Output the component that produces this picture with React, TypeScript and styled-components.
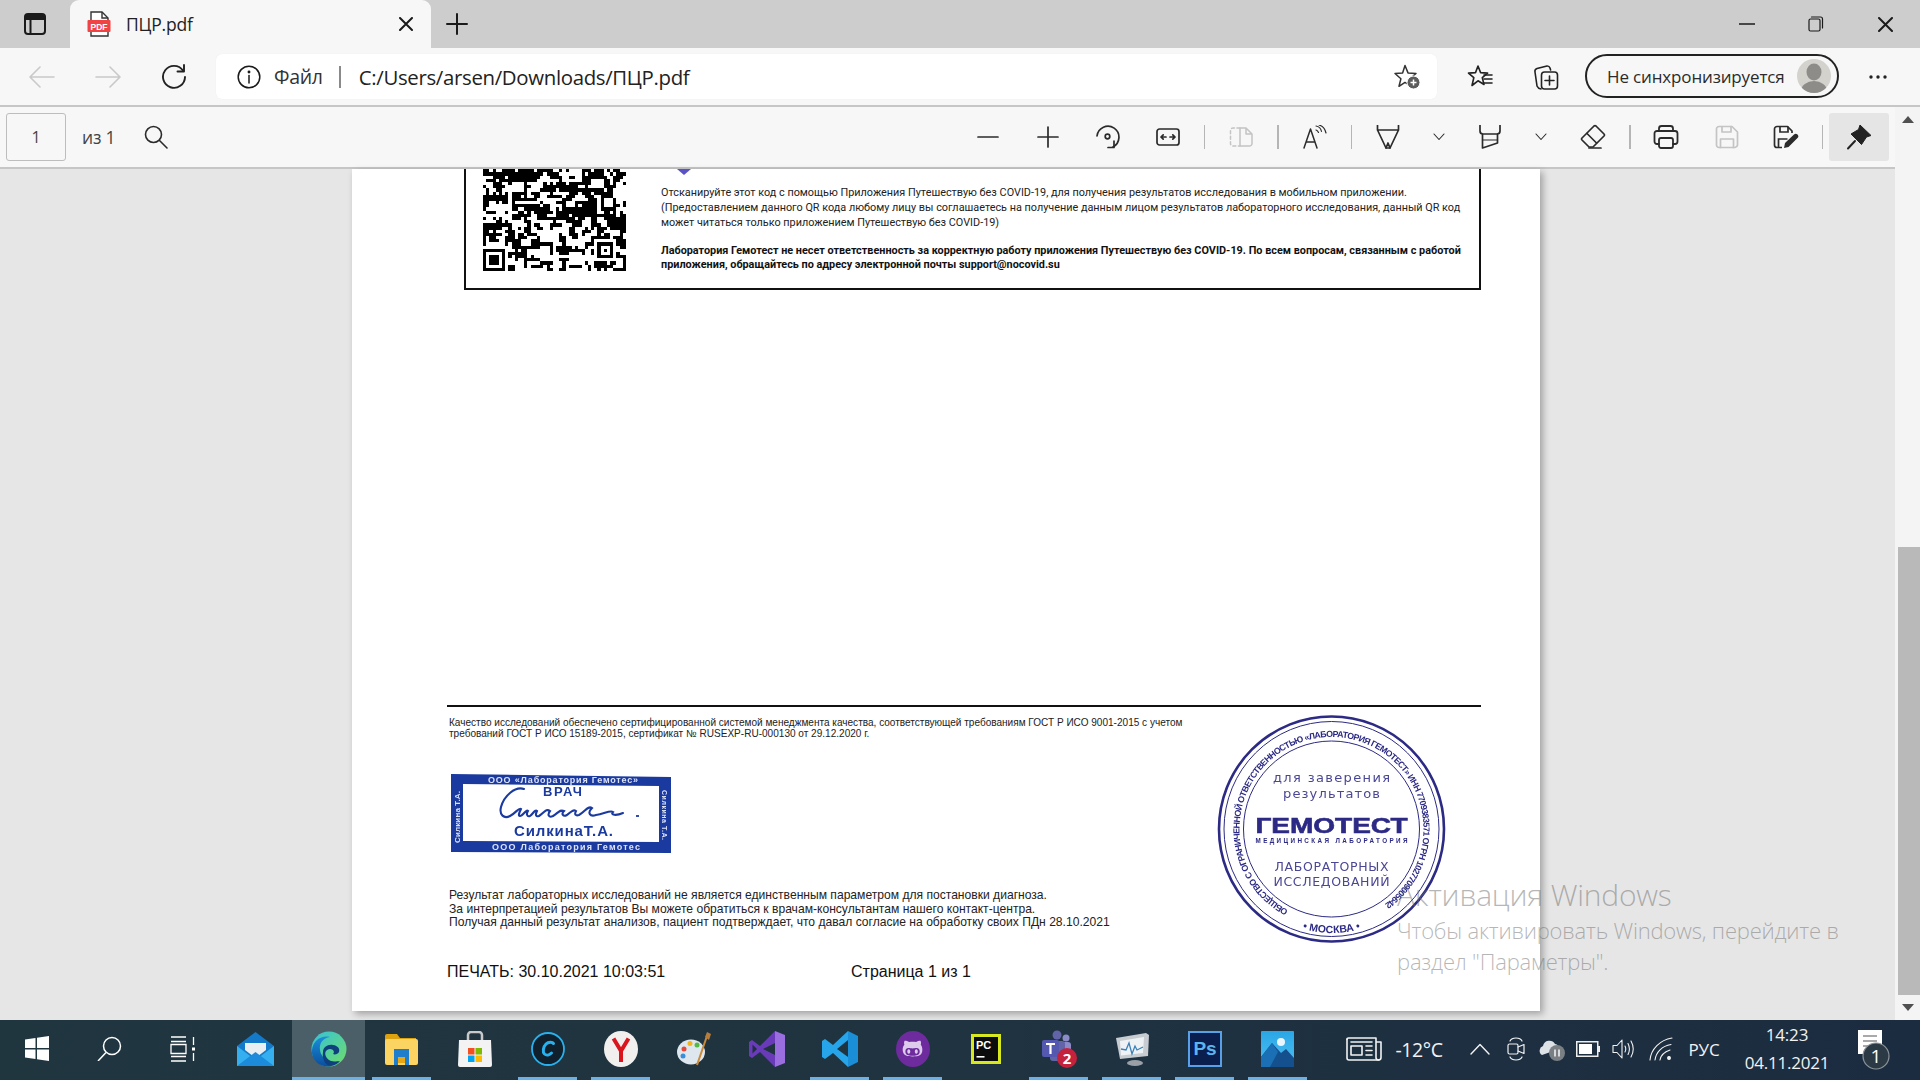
import React from 'react';
import styled, { createGlobalStyle } from 'styled-components';
import { FaGithubAlt } from 'react-icons/fa';

const GlobalStyle = createGlobalStyle`
  html, body { margin: 0; padding: 0; background: #e6e6e6; }
  body { font-family: "Open Sans", "Noto Sans", sans-serif; overflow: hidden; }
  * { box-sizing: border-box; }
`;

const Win = styled.div`
  position: relative;
  width: 1920px;
  height: 1080px;
  display: flex;
  flex-direction: column;
  overflow: hidden;
`;

/* ---------- tab strip ---------- */
const TabStrip = styled.div`
  height: 48px;
  flex: none;
  display: flex;
  align-items: stretch;
  background: #cdcdcd;
  color: #1a1a1a;
`;
const Slot = styled.div<{ $w: number; $ml?: number; $c?: string }>`
  width: ${p => p.$w}px;
  margin-left: ${p => p.$ml ?? 0}px;
  flex: none;
  display: flex;
  align-items: center;
  justify-content: center;
  color: ${p => p.$c ?? 'inherit'};
`;
const Tab = styled.div`
  width: 361px;
  padding: 0 18px 0 17px;
  display: flex;
  align-items: center;
  background: #f7f7f7;
  border-radius: 9px 9px 0 0;
`;
const TabTitle = styled.span`
  flex: 1;
  margin-left: 15px;
  font-size: 17.5px;
  color: #222;
  letter-spacing: -0.2px;
`;
const WinControls = styled.div`
  margin-left: auto;
  display: flex;
`;

/* ---------- address bar ---------- */
const AddressBar = styled.div`
  height: 59px;
  flex: none;
  display: flex;
  align-items: flex-start;
  padding: 6px 0 0 21px;
  background: #f7f7f7;
  border-bottom: 2px solid #c6c6c6;
  color: #1a1a1a;
`;
const NavBtn = styled.div<{ $w: number; $ml?: number; $mr?: number; $off?: boolean }>`
  width: ${p => p.$w}px;
  height: 45px;
  margin-left: ${p => p.$ml ?? 0}px;
  margin-right: ${p => p.$mr ?? 0}px;
  flex: none;
  display: flex;
  align-items: center;
  justify-content: center;
  color: ${p => (p.$off ? '#c9c9c9' : '#222')};
`;
const Omnibox = styled.div`
  width: 1221px;
  height: 45px;
  flex: none;
  display: flex;
  align-items: center;
  padding-left: 21px;
  background: #fff;
  border-radius: 6px;
  box-shadow: 0 0 1px rgba(0, 0, 0, 0.08);
`;
const FileLabel = styled.span`
  margin-left: 13px;
  font-size: 19.5px;
  color: #333;
  letter-spacing: -0.3px;
`;
const UrlDivider = styled.span`
  width: 2px;
  height: 22px;
  margin: 0 18px 0 16px;
  background: #8a8a8a;
`;
const Url = styled.span`
  flex: 1;
  font-size: 20.4px;
  color: #222;
  letter-spacing: -0.33px;
`;
const SyncPill = styled.div`
  width: 254px;
  height: 44px;
  margin-left: 8px;
  padding: 0 6px 0 20px;
  flex: none;
  display: flex;
  align-items: center;
  justify-content: space-between;
  border: 2px solid #222;
  border-radius: 22px;
  font-size: 17px;
  letter-spacing: -0.15px;
  color: #2b2b2b;
`;

/* ---------- viewer ---------- */
const Viewer = styled.div`
  flex: 1;
  min-height: 0;
  display: flex;
`;
const ViewerMain = styled.div`
  flex: 1;
  min-width: 0;
  display: flex;
  flex-direction: column;
`;
const PdfToolbar = styled.div`
  height: 62px;
  flex: none;
  display: flex;
  align-items: center;
  padding-left: 6px;
  background: #f7f7f7;
  border-bottom: 2px solid #c6c6c6;
  color: #2b2b2b;
`;
const PageInput = styled.div`
  width: 60px;
  height: 48px;
  display: flex;
  align-items: center;
  justify-content: center;
  border: 1px solid #bdbdbd;
  border-radius: 3px;
  font-size: 16px;
  color: #444;
`;
const PageCount = styled.span`
  margin-left: 16px;
  font-size: 17.5px;
  color: #444;
  letter-spacing: -0.2px;
`;
const SearchBtn = styled.div`
  margin-left: 29px;
  display: flex;
`;
const ToolGroup = styled.div`
  margin-left: auto;
  display: flex;
  align-items: center;
  height: 100%;
  padding-right: 6px;
`;
const ToolBtn = styled.div<{ $w: number; $off?: boolean; $on?: boolean }>`
  width: ${p => p.$w}px;
  height: 48px;
  flex: none;
  display: flex;
  align-items: center;
  justify-content: center;
  border-radius: 3px;
  color: ${p => (p.$off ? '#c4c4c4' : '#2b2b2b')};
  background: ${p => (p.$on ? '#e5e5e5' : 'transparent')};
`;
const ToolSep = styled.span<{ $w: number; $strong?: boolean }>`
  width: ${p => p.$w}px;
  flex: none;
  display: flex;
  justify-content: center;
  &::before {
    content: '';
    width: ${p => (p.$strong ? 2 : 1)}px;
    height: 24px;
    background: #b5b5b5;
  }
`;
const Canvas = styled.div`
  flex: 1;
  min-height: 0;
  padding-left: 352px;
  background: #e6e6e6;
`;
const Page = styled.div`
  width: 1188px;
  height: 842px;
  background: #fff;
  box-shadow: 3px 3px 7px rgba(0, 0, 0, 0.3);
  padding-left: 95px;
  color: #111;
  font-family: "Liberation Sans", Arial, sans-serif;
`;

/* qr block, its top is scrolled away */
const QrBox = styled.div`
  width: 1017px;
  height: 121px;
  margin-left: 17px;
  padding-left: 17px;
  display: flex;
  border: 2px solid #111;
  border-top: 0;
`;
const QrText = styled.div`
  position: relative;
  margin-left: 35px;
  padding-top: 16px;
  font-family: Roboto, "Liberation Sans", sans-serif;
  font-size: 10.85px;
  color: #222;
`;
const QrLine = styled.div<{ $bold?: boolean; $gap?: number }>`
  height: ${p => (p.$bold ? 14 : 15)}px;
  line-height: ${p => (p.$bold ? 14 : 15)}px;
  margin-top: ${p => p.$gap ?? 0}px;
  white-space: nowrap;
  font-weight: ${p => (p.$bold ? 700 : 400)};
  color: ${p => (p.$bold ? '#111' : '#222')};
`;
const AppMark = styled.svg`
  position: absolute;
  left: 16px;
  top: 0;
`;
const Rule = styled.div`
  width: 1034px;
  height: 2px;
  margin-top: 415px;
  background: #111;
`;
const Lower = styled.div`
  display: flex;
`;
const LowerLeft = styled.div`
  width: 763px;
  flex: none;
  padding-top: 10px;
`;
const CertText = styled.div`
  padding-left: 2px;
  font-size: 10.05px;
  line-height: 11px;
  color: #222;
  white-space: nowrap;
`;
const DoctorStamp = styled.svg`
  display: block;
  margin: 33px 0 0 3px;
  filter: blur(0.55px);
`;
const Notice = styled.div`
  margin-top: 35px;
  padding-left: 2px;
  font-size: 12.1px;
  line-height: 13.7px;
  color: #222;
  white-space: nowrap;
`;
const PrintRow = styled.div`
  margin-top: 32px;
  display: flex;
  font-size: 16px;
  line-height: 20px;
  color: #111;
  white-space: nowrap;
`;
const PrintDate = styled.span`
  width: 404px;
  flex: none;
`;
const RoundStamp = styled.svg`
  display: block;
  flex: none;
  margin-top: 2px;
  filter: blur(0.35px);
`;

/* ---------- scrollbar ---------- */
const Scrollbar = styled.div`
  width: 25px;
  flex: none;
  display: flex;
  flex-direction: column;
  align-items: flex-end;
  background: #f4f4f4;
`;
const ScrollArrow = styled.div<{ $down?: boolean }>`
  width: 100%;
  height: 25px;
  flex: none;
  display: flex;
  align-items: center;
  justify-content: center;
  &::before {
    content: '';
    border-left: 6px solid transparent;
    border-right: 6px solid transparent;
    ${p => (p.$down ? 'border-top: 7px solid #505050;' : 'border-bottom: 7px solid #505050;')}
  }
`;
const ScrollTrack = styled.div`
  flex: 1;
  width: 100%;
  display: flex;
  flex-direction: column;
  justify-content: flex-end;
  align-items: flex-end;
`;
const ScrollThumb = styled.div`
  width: 22px;
  height: 448px;
  background: #b9b9b9;
`;

/* ---------- taskbar ---------- */
const Taskbar = styled.div`
  height: 60px;
  flex: none;
  display: flex;
  background: linear-gradient(90deg, #20363f 0%, #1f3340 50%, #1c2c40 100%);
  color: #f2f2f2;
`;
const TaskBtn = styled.div<{ $active?: boolean; $open?: boolean }>`
  position: relative;
  width: 73px;
  flex: none;
  display: flex;
  align-items: center;
  justify-content: center;
  padding-bottom: 3px;
  background: ${p => (p.$active ? '#4b5f68' : 'transparent')};
  &::after {
    content: '';
    display: ${p => (p.$open || p.$active ? 'block' : 'none')};
    position: absolute;
    bottom: 0;
    left: ${p => (p.$active ? 0 : 7)}px;
    right: ${p => (p.$active ? 0 : 7)}px;
    height: 3px;
    background: #6cb0e6;
  }
`;
const GithubBadge = styled.div`
  width: 34px;
  height: 36px;
  border-radius: 50%;
  display: flex;
  align-items: center;
  justify-content: center;
  background: #6d2b9e;
  color: #dccbea;
`;
const Tray = styled.div`
  margin-left: 26px;
  display: flex;
  align-items: stretch;
`;
const TrayItem = styled(Slot)`
  padding-bottom: 2px;
`;
const TempText = styled.span`
  font-size: 19.5px;
  letter-spacing: -0.4px;
`;
const LangText = styled.span`
  font-size: 17px;
  letter-spacing: -0.2px;
`;
const Clock = styled.div`
  display: flex;
  flex-direction: column;
  align-items: center;
  gap: 6px;
  font-size: 17px;
  line-height: 22px;
  letter-spacing: -0.2px;
`;

const Watermark = styled.div`
  position: absolute;
  left: 1397px;
  top: 874px;
  color: rgba(110, 110, 110, 0.5);
  font-family: "Open Sans", sans-serif;
  font-weight: 300;
  white-space: nowrap;
  pointer-events: none;
`;
const WmTitle = styled.div`
  font-size: 30px;
  line-height: 41px;
  letter-spacing: -0.2px;
`;
const WmLine = styled.div`
  font-size: 22px;
  line-height: 31px;
  letter-spacing: -0.2px;
`;

/* ---------- icons ---------- */
const S = ({ w, h = w, sw = 1.6, children }: { w: number; h?: number; sw?: number; children: React.ReactNode }) => (
  <svg width={w} height={h} viewBox={`0 0 ${w} ${h}`} fill="none" stroke="currentColor" strokeWidth={sw} strokeLinecap="round" strokeLinejoin="round" style={{ display: 'block', flex: 'none' }}>
    {children}
  </svg>
);

const PanelIcon = () => (
  <S w={24} sw={2}>
    <rect x="2" y="2" width="20" height="20" rx="3" />
    <path d="M2 7h20M7.5 7v15" />
    <path d="M3 4.5h18" strokeWidth="3" />
  </S>
);
const PdfIcon = () => (
  <svg width="24" height="26" viewBox="0 0 24 26" style={{ display: 'block', flex: 'none' }}>
    <path d="M4 1h11l6 6v18H4z" fill="#fff" stroke="#333" strokeWidth="1.4" />
    <path d="M15 1v6h6" fill="none" stroke="#333" strokeWidth="1.4" />
    <rect x="0.5" y="9" width="23" height="12" rx="1" fill="#f04444" />
    <text x="12" y="18.5" textAnchor="middle" fontSize="8.5" fontWeight="700" fontFamily="Liberation Sans, sans-serif" fill="#fff">PDF</text>
  </svg>
);
const XIcon = ({ s = 14 }: { s?: number }) => (
  <S w={s} sw={2}>
    <path d={`M1 1L${s - 1} ${s - 1}M${s - 1} 1L1 ${s - 1}`} />
  </S>
);
const PlusIcon = ({ s = 22, sw = 2 }: { s?: number; sw?: number }) => (
  <S w={s} sw={sw}>
    <path d={`M${s / 2} 1V${s - 1}M1 ${s / 2}H${s - 1}`} />
  </S>
);
const MinIcon = () => (
  <S w={16} h={4} sw={1.3}><path d="M0 2h16" /></S>
);
const RestoreIcon = () => (
  <S w={16} sw={1.2}>
    <rect x="1" y="3" width="11" height="12" rx="1.5" />
    <path d="M3.5 1h9a2 2 0 0 1 2 2v9" />
  </S>
);
const BackIcon = ({ flip }: { flip?: boolean }) => (
  <S w={26} h={22} sw={1.6}>
    <path d={flip ? 'M1 11h24M15 1l10 10-10 10' : 'M25 11H1M11 1L1 11l10 10'} />
  </S>
);
const RefreshIcon = () => (
  <S w={26} sw={1.9}>
    <path d="M22 6.5A11 11 0 1 0 24 13" />
    <path d="M23 1v6.5h-6.5" />
  </S>
);
const InfoIcon = () => (
  <S w={24} sw={1.5}>
    <circle cx="12" cy="12" r="10.8" />
    <path d="M12 10.5v7.5" />
    <circle cx="12" cy="7" r=".7" fill="currentColor" />
  </S>
);
const StarAdd = () => (
  <svg width="28" height="26" viewBox="0 0 28 26" fill="none" style={{ display: 'block' }}>
    <path d="M12 1.5l3 7.4 8 .6-6 5.3 1.6 7.5L12 18.4 6 22.3l1.9-7.6L2 9.5l7.6-.6z" stroke="#333" strokeWidth="1.5" strokeLinejoin="round" />
    <circle cx="20.5" cy="18.5" r="6.5" fill="#5c5c5c" stroke="#fff" strokeWidth="1" />
    <path d="M20.5 15.5v6M17.5 18.5h6" stroke="#fff" strokeWidth="1.5" />
  </svg>
);
const FavIcon = () => (
  <S w={26} sw={1.6}>
    <path d="M11 2l2.6 6.6 7 .5-5.3 4.6 1.7 6.8L11 16.8l-6 4.7 1.8-7.8L1.5 9.1l7-.5z" />
    <path d="M17 11h8M17 15h8M17 19h8" />
  </S>
);
const CollectionIcon = () => (
  <S w={26} sw={1.6}>
    <path d="M8 25a5 5 0 0 1-4-3L2 8a3 3 0 0 1 2-3.5L14 2a3 3 0 0 1 3 2l.6 2" />
    <rect x="8.5" y="8" width="16" height="17" rx="3" />
    <path d="M16.5 12v9M12 16.5h9" />
  </S>
);
const Avatar = () => (
  <svg width="34" height="34" viewBox="0 0 34 34" style={{ display: 'block' }}>
    <defs><clipPath id="av"><circle cx="17" cy="17" r="17" /></clipPath></defs>
    <circle cx="17" cy="17" r="17" fill="#d3d2cd" />
    <g clipPath="url(#av)" fill="#8e8c88">
      <ellipse cx="17" cy="13" rx="7.5" ry="8.5" />
      <ellipse cx="17" cy="32" rx="13" ry="10" />
    </g>
  </svg>
);
const DotsIcon = () => (
  <svg width="18" height="4" viewBox="0 0 18 4" style={{ display: 'block' }} fill="#222">
    <circle cx="2" cy="2" r="1.7" /><circle cx="9" cy="2" r="1.7" /><circle cx="16" cy="2" r="1.7" />
  </svg>
);
const SearchIcon = () => (
  <S w={24} sw={1.6}>
    <circle cx="9.5" cy="9.5" r="8" />
    <path d="M15.5 15.5L23 23" />
  </S>
);
const RotateIcon = () => (
  <S w={26} sw={1.7}>
    <path d="M2 12A11 11 0 1 1 18 23" />
    <path d="M19 17v6.5h-6" />
    <circle cx="12.5" cy="12.5" r="2.3" />
  </S>
);
const FitIcon = () => (
  <S w={24} h={18} sw={1.7}>
    <rect x="1" y="1" width="22" height="16" rx="2.5" />
    <path d="M5 9h5M5 9l2.200-2.200M5 9l2.200 2.200M19 9h-5M19 9l-2.200-2.200M19 9l-2.200 2.200" />
  </S>
);
const PageViewIcon = () => (
  <S w={24} sw={1.5}>
    <path d="M11 3H4a2.5 2.5 0 0 0-2.500 2.500v13A2.5 2.5 0 0 0 4 21h7" strokeDasharray="3 2.5" />
    <path d="M11 3h6l6 6v9.500a2.5 2.5 0 0 1-2.500 2.500H11zM17 3v6h6" />
  </S>
);
const ReadAloudIcon = () => (
  <S w={24} sw={1.5}>
    <path d="M1 23L7.500 4 14 23M3.200 17h8.600" />
    <path d="M13 1c3 .5 5 3 5.500 5.500M16 0c3 .8 6 3.500 7 8M13 5c1.400.4 2 1.300 2.500 2.500" strokeWidth="1.2" />
  </S>
);
const PenIcon = () => (
  <S w={24} sw={1.7}>
    <path d="M1.500 0v5L10 23h4l8.500-18V0M1.500 5h21" />
    <path d="M10 23l2-5 2 5" />
  </S>
);
const HighlightIcon = () => (
  <S w={24} sw={1.7}>
    <path d="M2 0v6a3 3 0 0 0 3 3h14a3 3 0 0 0 3-3V0" />
    <path d="M4.500 9.500V23l15-5V9.500" />
    <path d="M4.500 15h15" strokeWidth="1.2" />
  </S>
);
const ChevronIcon = () => (
  <S w={12} h={8} sw={1.1}>
    <path d="M1 1l5 5.500L11 1" />
  </S>
);
const EraserIcon = () => (
  <S w={26} sw={1.7}>
    <path d="M16 2l8 8a1.5 1.5 0 0 1 0 2L13 23H9l-7-7a1.5 1.5 0 0 1 0-2L14 2a1.5 1.5 0 0 1 2 0z" />
    <path d="M7 9.500L16.500 19M9 24h12" />
  </S>
);
const PrintIcon = () => (
  <S w={26} sw={1.8}>
    <path d="M6 7V4.500A2.5 2.5 0 0 1 8.500 2h9A2.5 2.5 0 0 1 20 4.500V7" />
    <path d="M6 20H4a2.5 2.5 0 0 1-2.500-2.500v-8A2.5 2.5 0 0 1 4 7h18a2.5 2.5 0 0 1 2.500 2.500v8A2.5 2.5 0 0 1 22 20h-2" />
    <rect x="6" y="14" width="14" height="10" rx="2" />
  </S>
);
const SaveIcon = () => (
  <S w={24} sw={1.7}>
    <path d="M4 1.500h13l5.500 5.500v13a3 3 0 0 1-2.500 2.500H4A2.5 2.5 0 0 1 1.500 20V4A2.5 2.5 0 0 1 4 1.500z" />
    <path d="M7 1.500V7h9V1.500M5.500 22.500V14h13v8.500" />
  </S>
);
const SaveAsIcon = () => (
  <svg width="26" height="24" viewBox="0 0 26 24" fill="none" stroke="#2b2b2b" strokeWidth="1.7" style={{ display: 'block' }}>
    <path d="M19 8V6l-4.500-4.500H4A2.5 2.5 0 0 0 1.500 4v16A2.5 2.5 0 0 0 4 22.500h5" strokeLinejoin="round" />
    <path d="M7 1.500V7h8V1.500M5.500 22V14h9" />
    <path d="M11 23l1-5L21 9.500a2.2 2.2 0 0 1 3.500 3.500L15.500 22z" fill="#2b2b2b" stroke="none" />
  </svg>
);
const PinIcon = () => (
  <svg width="26" height="26" viewBox="0 0 26 26" style={{ display: 'block' }}>
    <path d="M14 1l11 10.500-4.500 1.500-5 7.500L5 10l7.500-4.500z" fill="#222" stroke="#222" strokeWidth="1" strokeLinejoin="round" />
    <path d="M9 17L2 24.500" stroke="#222" strokeWidth="2" strokeLinecap="round" />
  </svg>
);

/* taskbar icons */
const TB = ({ children, w = 36, h = 36 }: { children: React.ReactNode; w?: number; h?: number }) => (
  <svg width={w} height={h} viewBox={`0 0 ${w} ${h}`} fill="none" style={{ display: 'block', flex: 'none' }}>
    {children}
  </svg>
);

const WindowsLogo = () => (
  <TB w={24} h={25}>
    <path d="M0 3.500L10.500 2v10H0zM12 1.800L24 0v12H12zM0 13.500h10.500V23L0 21.500zM12 13.500h12V25l-12-1.800z" fill="#fff" />
  </TB>
);
const TbSearch = () => (
  <TB w={25} h={25}>
    <circle cx="15" cy="10" r="8.500" stroke="#fff" strokeWidth="1.5" />
    <path d="M9 16.500L1 25" stroke="#fff" strokeWidth="1.5" />
  </TB>
);
const TaskView = () => (
  <TB w={26} h={26}>
    <path d="M1 1h15M1 5.500h15M1 8.500h15v9H1zM1 20.500h15M1 25h15" stroke="#fff" strokeWidth="1.3" />
    <path d="M23.500 1v8M23.500 17v8" stroke="#fff" strokeWidth="1.3" />
    <rect x="22" y="11.500" width="3" height="3" fill="#fff" />
  </TB>
);
const Mail = () => (
  <TB w={37} h={34}>
    <path d="M18.500 0L37 14v20H0V14z" fill="#1479c8" />
    <path d="M8 11h21v7l-10.500 8L8 18z" fill="#e8eef2" />
    <path d="M0 14l18.500 14L37 14v20H0z" fill="#35aff0" />
    <path d="M0 34l18.500-14L37 34z" fill="#1c8bdc" />
  </TB>
);
const Edge = () => (
  <TB>
    <defs>
      <linearGradient id="edgeA" x1="0" y1="0" x2="1" y2="1"><stop offset="0" stopColor="#36c1d8" /><stop offset="1" stopColor="#6fdc6a" /></linearGradient>
      <linearGradient id="edgeB" x1="0" y1="0" x2="0" y2="1"><stop offset="0" stopColor="#1b8ed8" /><stop offset="1" stopColor="#0a4f9e" /></linearGradient>
    </defs>
    <circle cx="18" cy="18" r="17.500" fill="url(#edgeA)" />
    <path d="M1 19C2 9 11 4 19 6c-7 1-11 6-10 13 1 8 9 14 19 11-3 3-6 5.500-11 5.500C8 35.500 0 29 1 19z" fill="url(#edgeB)" />
    <path d="M12 21c0-5 5-8 10-7 5 .5 7 4 6 7-1 2-4 3-6 2 3-3-2-7-6-4-3 2-2 7 2 10 3 2 8 2 11 1-2 3-6 5-11 4.500C13 33 11 26 12 21z" fill="#103f7e" />
  </TB>
);
const Explorer = () => (
  <TB w={33} h={32}>
    <path d="M0 3a2 2 0 0 1 2-2h10l3 4h16v4H0z" fill="#dea10f" />
    <rect y="6" width="33" height="26" rx="2" fill="#fbd462" />
    <path d="M9 16h15v16h-4v-8h-7v8H9z" fill="#1f7ecb" />
    <path d="M13 24h7v6h-7z" fill="#e8a613" />
  </TB>
);
const Store = () => (
  <TB w={36} h={36}>
    <path d="M11 9V4a3 3 0 0 1 3-3h8a3 3 0 0 1 3 3v5" stroke="#c9c9c9" strokeWidth="2.5" />
    <path d="M2 9h32l1 25a2 2 0 0 1-2 2H3a2 2 0 0 1-2-2z" fill="#f3f3f3" />
    <rect x="11" y="17" width="6.500" height="6.500" fill="#f25022" />
    <rect x="18.500" y="17" width="6.500" height="6.500" fill="#7fba00" />
    <rect x="11" y="24.500" width="6.500" height="6.500" fill="#00a4ef" />
    <rect x="18.500" y="24.500" width="6.500" height="6.500" fill="#ffb900" />
  </TB>
);
const CCleaner = () => (
  <TB w={34} h={34}>
    <circle cx="17" cy="17" r="16" fill="#10202c" stroke="#29b1ee" strokeWidth="1.8" />
    <path d="M22.500 11.500c-1-1.800-5-2-7.500.5-3 3-3.500 8-1.500 10 2 1.800 5 1 7-1" stroke="#29b1ee" strokeWidth="3" strokeLinecap="round" />
  </TB>
);
const Yandex = () => (
  <TB w={34} h={36}>
    <ellipse cx="17" cy="18" rx="17" ry="18" fill="#f2f0ee" />
    <path d="M9.500 7.500L17 20v11M24.500 7.500L17 20" stroke="#d9151e" strokeWidth="4" />
  </TB>
);
const Paint = () => (
  <TB w={34} h={36}>
    <ellipse cx="14" cy="21" rx="14" ry="12.500" fill="#dfe7ee" />
    <circle cx="7" cy="18" r="2.500" fill="#e34a3a" />
    <circle cx="13" cy="12.500" r="2.500" fill="#f2b31d" />
    <circle cx="20" cy="14" r="2.500" fill="#55b947" />
    <circle cx="6" cy="25" r="2.500" fill="#3b8ed8" />
    <path d="M20 34L30 5" stroke="#c98a3a" strokeWidth="2" />
    <path d="M28 6l2-5 4 2-2 6z" fill="#b57c3c" />
  </TB>
);
const VsIcon = () => (
  <TB w={36} h={36}>
    <path d="M26 0l10 4v28l-10 4z" fill="#9a6ede" />
    <path d="M26 0L11 15 3 9l-3 2v14l3 2 8-6 15 15V24L14 18 26 12z" fill="#6a3bb8" />
    <path d="M3.500 13.500L8 18l-4.500 4.500z" fill="#1e2f40" />
  </TB>
);
const VsCode = () => (
  <TB w={36} h={36}>
    <path d="M26 0l10 5v26l-10 5z" fill="#1a8fd8" />
    <path d="M26 0L11 14 3 8 0 10v16l3 2 8-6 15 14v-10L15 18 26 9z" fill="#27a5ea" />
  </TB>
);
const PyCharm = () => (
  <TB w={30} h={30}>
    <rect width="30" height="30" fill="#d8e81e" />
    <rect x="3" y="3" width="24" height="24" fill="#0c0c0c" />
    <text x="5" y="15" fontSize="11" fontWeight="700" fontFamily="Liberation Sans, sans-serif" fill="#fff">PC</text>
    <rect x="5.500" y="22" width="8" height="1.6" fill="#fff" />
  </TB>
);
const Teams = () => (
  <TB w={40} h={40}>
    <circle cx="18" cy="6" r="4.500" fill="#6264a7" />
    <circle cx="27" cy="9" r="3.500" fill="#8b8cc7" />
    <rect x="19" y="13" width="13" height="14" rx="3" fill="#8b8cc7" />
    <rect x="11" y="12" width="15" height="20" rx="3" fill="#6264a7" />
    <rect x="3" y="11" width="17" height="17" rx="2" fill="#5558af" />
    <path d="M7 15h9M11.500 15v10" stroke="#fff" strokeWidth="2.2" />
    <circle cx="28" cy="29" r="10" fill="#c4213d" />
    <text x="28" y="34.500" textAnchor="middle" fontSize="15" fontWeight="700" fontFamily="Open Sans, sans-serif" fill="#fff">2</text>
  </TB>
);
const PerfMon = () => (
  <TB w={36} h={34}>
    <path d="M2 6l30-5 3 2-1 21-28 3z" fill="#c7ccd0" />
    <path d="M6 9l24-4-1 16-22 2.500z" fill="#eef2f5" />
    <path d="M7 17l5 1 3-7 3 11 3-8 2 4 6-3" stroke="#3a80b8" strokeWidth="1.3" />
    <ellipse cx="21" cy="31" rx="8" ry="3" fill="#9aa0a5" />
  </TB>
);
const Photoshop = () => (
  <TB w={34} h={36}>
    <rect x="1" y="1" width="32" height="34" fill="#0a1f4e" stroke="#5aa0e6" strokeWidth="2" />
    <text x="17" y="24" textAnchor="middle" fontSize="19" fontWeight="700" fontFamily="Liberation Sans, sans-serif" fill="#5cb4ef">Ps</text>
  </TB>
);
const Photos = () => (
  <TB w={33} h={36}>
    <defs><linearGradient id="ph" x1="0" y1="0" x2="0" y2="1"><stop offset="0" stopColor="#2aa6e6" /><stop offset="1" stopColor="#4fc0f2" /></linearGradient></defs>
    <rect width="33" height="36" rx="1" fill="url(#ph)" />
    <circle cx="20" cy="11" r="4" fill="#e9f6fd" />
    <path d="M0 26L11 12l9 10 5-4 8 9v9H0z" fill="#14508e" />
    <path d="M0 36V26L11 12l6 9-8 15z" fill="#1b6fb4" />
  </TB>
);

const NewsIcon = () => (
  <S w={36} h={24} sw={1.6}>
    <path d="M1 2.500A1.5 1.5 0 0 1 2.500 1H30v19.500a2.5 2.5 0 0 0 5 0V5h-5" />
    <path d="M2.500 23H33M1 2v19a2 2 0 0 0 2 2" />
    <rect x="5" y="9" width="11" height="9" />
    <path d="M5 5h21M20 9h6M20 13.500h6M20 18h6" />
  </S>
);
const ChevUp = () => (
  <S w={20} h={12} sw={1.4}><path d="M1 11l9-9.500L19 11" /></S>
);
const MeetIcon = () => (
  <S w={18} h={24} sw={1.2}>
    <path d="M3 4C4 2 6 1 9 1s5 1 6 3M3 20c1 2 3 3 6 3s5-1 6-3" />
    <rect x="1" y="7" width="10" height="10" rx="1.5" />
    <path d="M11 10l6-2.500v9L11 14" />
  </S>
);
const CloudIcon = () => (
  <svg width="28" height="24" viewBox="0 0 28 24" style={{ display: 'block' }}>
    <path d="M3 18a5 5 0 0 1 1-9 6.500 6.500 0 0 1 12-2 5 5 0 0 1 4 5z" fill="#dce2e6" />
    <circle cx="18" cy="16" r="8" fill="#7a7f83" />
    <path d="M16 12.500v7M20 12.500v7" stroke="#fff" strokeWidth="1.4" />
  </svg>
);
const BatteryIcon = () => (
  <svg width="24" height="16" viewBox="0 0 24 16" fill="none" style={{ display: 'block' }}>
    <rect x=".75" y=".75" width="21" height="14.500" stroke="#eee" strokeWidth="1.5" />
    <rect x="3" y="3" width="13" height="10" fill="#fff" />
    <rect x="22" y="5" width="2" height="6" fill="#eee" />
  </svg>
);
const VolumeIcon = () => (
  <S w={22} sw={1.1}>
    <path d="M1 7.500h4L10 2v18l-5-5.500H1z" />
    <path d="M13 8c1 2 1 4 0 6M16 5.500c1.800 3.500 1.800 7.500 0 11M19 3c2.800 5 2.800 11 0 16" />
  </S>
);
const WifiIcon = () => (
  <S w={24} sw={1.1}>
    <path d="M1 23C2 12 11 3 23 1M6 23c1-8 7-14 16-15.500M11 23c.8-5 4-8 10-10" />
    <circle cx="20" cy="21" r="1.4" fill="currentColor" />
  </S>
);
const NotifyIcon = () => (
  <svg width="38" height="44" viewBox="0 0 38 44" style={{ display: 'block' }}>
    <path d="M5 3h24v24H16l-6 6v-6H5z" fill="#fff" />
    <path d="M10 9h14M10 14h14M10 19h14" stroke="#555" strokeWidth="1.2" />
    <circle cx="23" cy="29" r="13" fill="#2b3a44" stroke="#8a9299" strokeWidth="1.2" />
    <text x="23" y="36" textAnchor="middle" fontSize="19" fontFamily="Open Sans, sans-serif" fill="#fff">1</text>
  </svg>
);

/* the QR is a picture in the scan, so it is only drawn to look alike */
const qrCols = 45;
const qrRows = 32;
const qrCell = 143 / qrCols;
function qrPath() {
  let seed = 20211030;
  const rnd = () => {
    seed = (seed * 1664525 + 1013904223) % 4294967296;
    return seed / 4294967296;
  };
  const grid: number[][] = [];
  for (let r = 0; r < qrRows; r++) {
    const row: number[] = [];
    for (let c = 0; c < qrCols; c++) {
      let v = rnd() < 0.52 ? 1 : 0;
      if (r > 0 && rnd() < 0.35) v = grid[r - 1][c];
      if (c > 0 && rnd() < 0.3) v = row[c - 1];
      row.push(v);
    }
    grid.push(row);
  }
  // finder bottom-left, alignment bottom-right
  const box = (r0: number, c0: number, size: number, inner: number) => {
    for (let r = r0 - 1; r <= r0 + size; r++)
      for (let c = c0 - 1; c <= c0 + size; c++) {
        if (r < 0 || r >= qrRows || c < 0 || c >= qrCols) continue;
        const dr = Math.min(r - r0, r0 + size - 1 - r);
        const dc = Math.min(c - c0, c0 + size - 1 - c);
        const d = Math.min(dr, dc);
        grid[r][c] = d < 0 ? 0 : d === 0 ? 1 : d < inner ? 0 : 1;
      }
  };
  box(qrRows - 7, 0, 7, 2);
  box(qrRows - 9, qrCols - 9, 5, 2);
  let d = '';
  grid.forEach((row, r) =>
    row.forEach((v, c) => {
      if (v) d += `M${(c * qrCell).toFixed(2)} ${(r * qrCell).toFixed(2)}h${qrCell.toFixed(2)}v${qrCell.toFixed(2)}h-${qrCell.toFixed(2)}z`;
    })
  );
  return d;
}
const qrD = qrPath();

const QrCode = () => (
  <svg width="143" height="102" viewBox={`0 ${qrRows * qrCell - 102} 143 102`} style={{ display: 'block', flex: 'none' }} fill="#000" shapeRendering="crispEdges">
    <path d={qrD} />
  </svg>
);

const inkBlue = '#2c2a84';
const arc = (r: number, from: number, to: number, sweep: 0 | 1) => {
  const pt = (a: number) => {
    const t = ((a - 90) * Math.PI) / 180;
    return `${(121.5 + r * Math.cos(t)).toFixed(2)} ${(120 + r * Math.sin(t)).toFixed(2)}`;
  };
  const span = sweep ? (to - from + 360) % 360 : (from - to + 360) % 360;
  return `M${pt(from)}A${r} ${r} 0 ${span > 180 ? 1 : 0} ${sweep} ${pt(to)}`;
};

const CompanyStamp = () => (
  <RoundStamp width="240" height="240" viewBox="0 0 240 240" fill="none">
    <defs>
      <path id="ringMain" d={arc(92, 208, 155, 1)} />
      <path id="ringCity" d={arc(104, 212, 148, 0)} />
    </defs>
    <circle cx="121.5" cy="120" r="112.5" stroke={inkBlue} strokeWidth="2.6" />
    <circle cx="121.5" cy="120" r="107.5" stroke={inkBlue} strokeWidth="1" />
    <circle cx="121.5" cy="120" r="88" stroke={inkBlue} strokeWidth="1" />
    <g fontFamily="Liberation Sans, sans-serif" fill={inkBlue}>
      <text fontSize="8.8" fontWeight="700" letterSpacing="-.62">
        <textPath href="#ringMain">ОБЩЕСТВО С ОГРАНИЧЕННОЙ ОТВЕТСТВЕННОСТЬЮ «ЛАБОРАТОРИЯ ГЕМОТЕСТ» ИНН 7709383571 ОГРН 1027709005642</textPath>
      </text>
      <text fontSize="10.5" fontWeight="700">
        <textPath href="#ringCity" startOffset="50%" textAnchor="middle">• МОСКВА •</textPath>
      </text>
      <text x="121.5" y="73" textAnchor="middle" fontSize="13" fill="#4a4794" fontFamily="DejaVu Sans, sans-serif" textLength="117">для заверения</text>
      <text x="121.5" y="89" textAnchor="middle" fontSize="13" fill="#4a4794" fontFamily="DejaVu Sans, sans-serif" textLength="97">результатов</text>
      <text x="121.5" y="124" textAnchor="middle" fontSize="22.5" fontWeight="700" textLength="152" lengthAdjust="spacingAndGlyphs" stroke={inkBlue} strokeWidth=".6">ГЕМОТЕСТ</text>
      <text x="121.5" y="134" textAnchor="middle" fontSize="6.3" fontWeight="700" textLength="152" lengthAdjust="spacing">МЕДИЦИНСКАЯ ЛАБОРАТОРИЯ</text>
      <text x="121.5" y="162" textAnchor="middle" fontSize="12.5" fill="#4a4794" fontFamily="DejaVu Sans, sans-serif" textLength="114">ЛАБОРАТОРНЫХ</text>
      <text x="121.5" y="177" textAnchor="middle" fontSize="12.5" fill="#4a4794" fontFamily="DejaVu Sans, sans-serif" textLength="116">ИССЛЕДОВАНИЙ</text>
    </g>
  </RoundStamp>
);

const stampBlue = '#1b3aa0';
const DoctorSeal = () => (
  <DoctorStamp width="222" height="82" viewBox="0 0 222 82" fill="none">
    <path fillRule="evenodd" d="M1 2L221 5v76L1 80zM13 12v57l196 1V14z" fill={stampBlue} />
    <g fontFamily="Liberation Sans, sans-serif" fontWeight="700">
      <text x="38" y="10.5" fontSize="9" fill="#dbe3f7" textLength="150">ООО «Лаборатория Гемотес»</text>
      <text x="42" y="78" fontSize="9" fill="#dbe3f7" textLength="148">ООО Лаборатория Гемотес</text>
      <text transform="translate(10 71) rotate(-90)" fontSize="8" fill="#dbe3f7" textLength="52">Силкина Т.А.</text>
      <text transform="translate(212 18) rotate(90)" fontSize="7" fill="#dbe3f7" textLength="50">Силкина Т.А.</text>
      <text x="93" y="24" fontSize="13" fill={stampBlue} textLength="39">ВРАЧ</text>
      <text x="64" y="64" fontSize="15" fill={stampBlue} textLength="99">СилкинаТ.А.</text>
    </g>
    <path d="M74 17c-9-3-20 7-23 18-2 8 3 12 9 9 6-3 9-9 11-7-2 4-3 7-1 7 3 0 6-7 8-5-2 3-1 6 2 5 3-2 5-7 7-5-2 4-1 6 2 5 5-3 7-8 11-5-3 4-1 7 3 5 5-3 7-7 11-5-3 3-1 6 3 4 4-3 6-6 9-4-2 4 0 5 3 4 6-3 9-10 13-7-5 5-2 9 4 7 8-1 14-5 17-3-3 3 3 4 10 1" stroke={stampBlue} strokeWidth="2.1" strokeLinecap="round" />
    <path d="M186 44h3" stroke={stampBlue} strokeWidth="1.8" />
  </DoctorStamp>
);

export default function App() {
  return (
    <Win>
      <GlobalStyle />
      <TabStrip>
        <Slot $w={70}><PanelIcon /></Slot>
        <Tab>
          <PdfIcon />
          <TabTitle>ПЦР.pdf</TabTitle>
          <Slot $w={14}><XIcon /></Slot>
        </Tab>
        <Slot $w={52}><PlusIcon /></Slot>
        <WinControls>
          <Slot $w={70}><MinIcon /></Slot>
          <Slot $w={68}><RestoreIcon /></Slot>
          <Slot $w={70}><XIcon s={15} /></Slot>
        </WinControls>
      </TabStrip>

      <AddressBar>
        <NavBtn $w={42} $off><BackIcon /></NavBtn>
        <NavBtn $w={90} $off><BackIcon flip /></NavBtn>
        <NavBtn $w={42} $mr={21}><RefreshIcon /></NavBtn>
        <Omnibox>
          <InfoIcon />
          <FileLabel>Файл</FileLabel>
          <UrlDivider />
          <Url>C:/Users/arsen/Downloads/ПЦР.pdf</Url>
          <NavBtn $w={60}><StarAdd /></NavBtn>
        </Omnibox>
        <NavBtn $w={70} $ml={8}><FavIcon /></NavBtn>
        <NavBtn $w={62}><CollectionIcon /></NavBtn>
        <SyncPill>
          <span>Не синхронизируется</span>
          <Avatar />
        </SyncPill>
        <NavBtn $w={78}><DotsIcon /></NavBtn>
      </AddressBar>

      <Viewer>
        <ViewerMain>
          <PdfToolbar>
            <PageInput>1</PageInput>
            <PageCount>из 1</PageCount>
            <SearchBtn><SearchIcon /></SearchBtn>
            <ToolGroup>
              <ToolBtn $w={60}><S w={22} h={4} sw={1.7}><path d="M1 2h20" /></S></ToolBtn>
              <ToolBtn $w={60}><PlusIcon s={22} sw={1.7} /></ToolBtn>
              <ToolBtn $w={60}><RotateIcon /></ToolBtn>
              <ToolBtn $w={60}><FitIcon /></ToolBtn>
              <ToolSep $w={12} />
              <ToolBtn $w={62} $off><PageViewIcon /></ToolBtn>
              <ToolSep $w={12} $strong />
              <ToolBtn $w={62}><ReadAloudIcon /></ToolBtn>
              <ToolSep $w={10} />
              <ToolBtn $w={64}><PenIcon /></ToolBtn>
              <ToolBtn $w={38}><ChevronIcon /></ToolBtn>
              <ToolBtn $w={64}><HighlightIcon /></ToolBtn>
              <ToolBtn $w={38}><ChevronIcon /></ToolBtn>
              <ToolBtn $w={65}><EraserIcon /></ToolBtn>
              <ToolSep $w={10} $strong />
              <ToolBtn $w={62}><PrintIcon /></ToolBtn>
              <ToolBtn $w={60} $off><SaveIcon /></ToolBtn>
              <ToolBtn $w={58}><SaveAsIcon /></ToolBtn>
              <ToolSep $w={14} />
              <ToolBtn $w={60} $on><PinIcon /></ToolBtn>
            </ToolGroup>
          </PdfToolbar>
          <Canvas>
            <Page>
              <QrBox>
                <QrCode />
                <QrText>
                  <AppMark width="14" height="6" viewBox="0 0 14 6"><path d="M0 0h14L7 6z" fill="#5b52c8" /></AppMark>
                  <QrLine>Отсканируйте этот код с помощью Приложения Путешествую без COVID-19, для получения результатов исследования в мобильном приложении.</QrLine>
                  <QrLine>(Предоставлением данного QR кода любому лицу вы соглашаетесь на получение данным лицом результатов лабораторного исследования, данный QR код</QrLine>
                  <QrLine>может читаться только приложением Путешествую без COVID-19)</QrLine>
                  <QrLine $bold $gap={14}>Лаборатория Гемотест не несет ответственность за корректную работу приложения Путешествую без COVID-19. По всем вопросам, связанным с работой</QrLine>
                  <QrLine $bold>приложения, обращайтесь по адресу электронной почты support@nocovid.su</QrLine>
                </QrText>
              </QrBox>
              <Rule />
              <Lower>
                <LowerLeft>
                  <CertText>
                    Качество исследований обеспечено сертифицированной системой менеджмента качества, соответствующей требованиям ГОСТ Р ИСО 9001-2015 с учетом
                    <br />
                    требований ГОСТ Р ИСО 15189-2015, сертификат № RUSEXP-RU-000130 от 29.12.2020 г.
                  </CertText>
                  <DoctorSeal />
                  <Notice>
                    Результат лабораторных исследований не является единственным параметром для постановки диагноза.
                    <br />
                    За интерпретацией результатов Вы можете обратиться к врачам-консультантам нашего контакт-центра.
                    <br />
                    Получая данный результат анализов, пациент подтверждает, что давал согласие на обработку своих ПДн 28.10.2021
                  </Notice>
                  <PrintRow>
                    <PrintDate>ПЕЧАТЬ: 30.10.2021 10:03:51</PrintDate>
                    <span>Страница 1 из 1</span>
                  </PrintRow>
                </LowerLeft>
                <CompanyStamp />
              </Lower>
            </Page>
          </Canvas>
        </ViewerMain>
        <Scrollbar>
          <ScrollArrow />
          <ScrollTrack><ScrollThumb /></ScrollTrack>
          <ScrollArrow $down />
        </Scrollbar>
      </Viewer>

      <Taskbar>
        <TaskBtn><WindowsLogo /></TaskBtn>
        <TaskBtn><TbSearch /></TaskBtn>
        <TaskBtn><TaskView /></TaskBtn>
        <TaskBtn><Mail /></TaskBtn>
        <TaskBtn $active><Edge /></TaskBtn>
        <TaskBtn $open><Explorer /></TaskBtn>
        <TaskBtn><Store /></TaskBtn>
        <TaskBtn $open><CCleaner /></TaskBtn>
        <TaskBtn $open><Yandex /></TaskBtn>
        <TaskBtn><Paint /></TaskBtn>
        <TaskBtn><VsIcon /></TaskBtn>
        <TaskBtn $open><VsCode /></TaskBtn>
        <TaskBtn $open><GithubBadge><FaGithubAlt size={21} /></GithubBadge></TaskBtn>
        <TaskBtn><PyCharm /></TaskBtn>
        <TaskBtn $open><Teams /></TaskBtn>
        <TaskBtn $open><PerfMon /></TaskBtn>
        <TaskBtn $open><Photoshop /></TaskBtn>
        <TaskBtn $open><Photos /></TaskBtn>
        <Tray>
          <TrayItem $w={48}><NewsIcon /></TrayItem>
          <TrayItem $w={62}><TempText>-12°C</TempText></TrayItem>
          <TrayItem $w={36} $ml={12}><ChevUp /></TrayItem>
          <TrayItem $w={36}><MeetIcon /></TrayItem>
          <TrayItem $w={36} $ml={1}><CloudIcon /></TrayItem>
          <TrayItem $w={36} $ml={-1}><BatteryIcon /></TrayItem>
          <TrayItem $w={36} $ml={-1}><VolumeIcon /></TrayItem>
          <TrayItem $w={36} $ml={2}><WifiIcon /></TrayItem>
          <TrayItem $w={50}><LangText>РУС</LangText></TrayItem>
          <TrayItem $w={100} $ml={8}>
            <Clock>
              <span>14:23</span>
              <span>04.11.2021</span>
            </Clock>
          </TrayItem>
          <TrayItem $w={48} $ml={11}><NotifyIcon /></TrayItem>
        </Tray>
      </Taskbar>

      <Watermark>
        <WmTitle>Активация Windows</WmTitle>
        <WmLine>Чтобы активировать Windows, перейдите в</WmLine>
        <WmLine>раздел "Параметры".</WmLine>
      </Watermark>
    </Win>
  );
}
